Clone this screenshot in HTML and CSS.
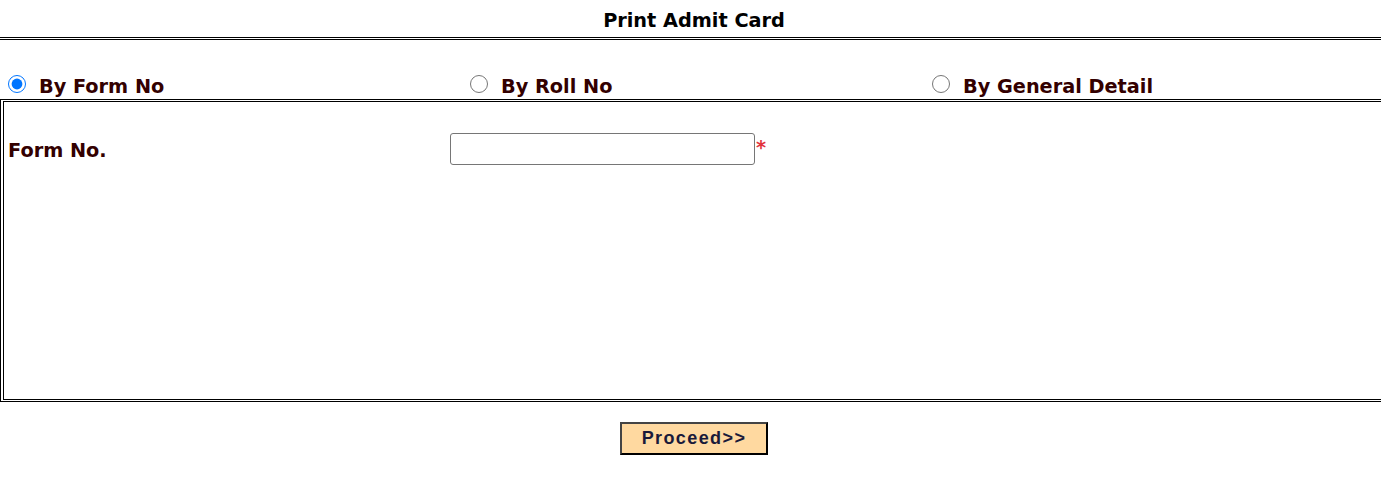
FILE: index.html
```html
<!DOCTYPE html>
<html>
<head>
<meta charset="utf-8">
<title>Print Admit Card</title>
<link rel="stylesheet" href="styles.css">
</head>
<body>
<div class="page">
  <div class="title">Print Admit Card</div>
  <div class="options">
    <label class="opt"><input type="radio" name="mode" checked><span>By Form No</span></label>
    <label class="opt"><input type="radio" name="mode"><span>By Roll No</span></label>
    <label class="opt"><input type="radio" name="mode"><span>By General Detail</span></label>
  </div>
  <div class="box">
    <div class="row">
      <div class="label">Form No.</div>
      <div class="field"><input type="text" class="txt"><span class="req">*</span></div>
    </div>
  </div>
  <div class="actions">
    <button class="btn" type="button">Proceed&gt;&gt;</button>
  </div>
</div>
</body>
</html>
```

FILE: styles.css
```css
html, body {
  margin: 0;
  padding: 0;
  overflow: hidden;
  background: #fff;
}
.page {
  width: 1388px;
  font-family: "DejaVu Sans", Verdana, sans-serif;
  font-weight: bold;
  font-size: 19.3px;
  line-height: 22px;
}
.title {
  text-align: center;
  color: #000;
  padding: 10px 0 5px;
  border-bottom: 3px double #000;
}
.options {
  display: grid;
  grid-template-columns: 462px 462px 462px;
  padding: 36px 0 1px;
  color: #330000;
}
.opt {
  display: flex;
  align-items: center;
}
.opt input {
  width: 18px;
  height: 18px;
  margin: -7px 13px 0 8px;
  accent-color: #0075ff;
}
.box {
  border: 3px double #000;
  border-left-width: 4px;
  height: 297px;
  box-sizing: content-box;
}
.row {
  display: grid;
  grid-template-columns: 442px 1fr;
  align-items: center;
  padding: 31px 0 0 4px;
  color: #330000;
}
.label {
  padding-top: 4px;
}
.field {
  display: flex;
  align-items: flex-start;
}
.txt {
  width: 305px;
  height: 32px;
  box-sizing: border-box;
  border: 1px solid #767676;
  border-radius: 3px;
  margin: 0;
  padding: 2px 4px;
  font-family: "DejaVu Sans", sans-serif;
  font-size: 14px;
}
.req {
  color: #e2323c;
  font-weight: bold;
  margin: 4px 0 0 1px;
}
.actions {
  display: flex;
  justify-content: center;
  padding-top: 20px;
}
.btn {
  width: 148px;
  height: 33px;
  box-sizing: border-box;
  background: #ffd9a0;
  border: 2px solid;
  border-color: #444 #000 #000 #444;
  font-family: "Liberation Sans", Arial, sans-serif;
  font-weight: bold;
  font-size: 18px;
  letter-spacing: 1.4px;
  color: #1a1a3a;
  padding: 0;
}
```
